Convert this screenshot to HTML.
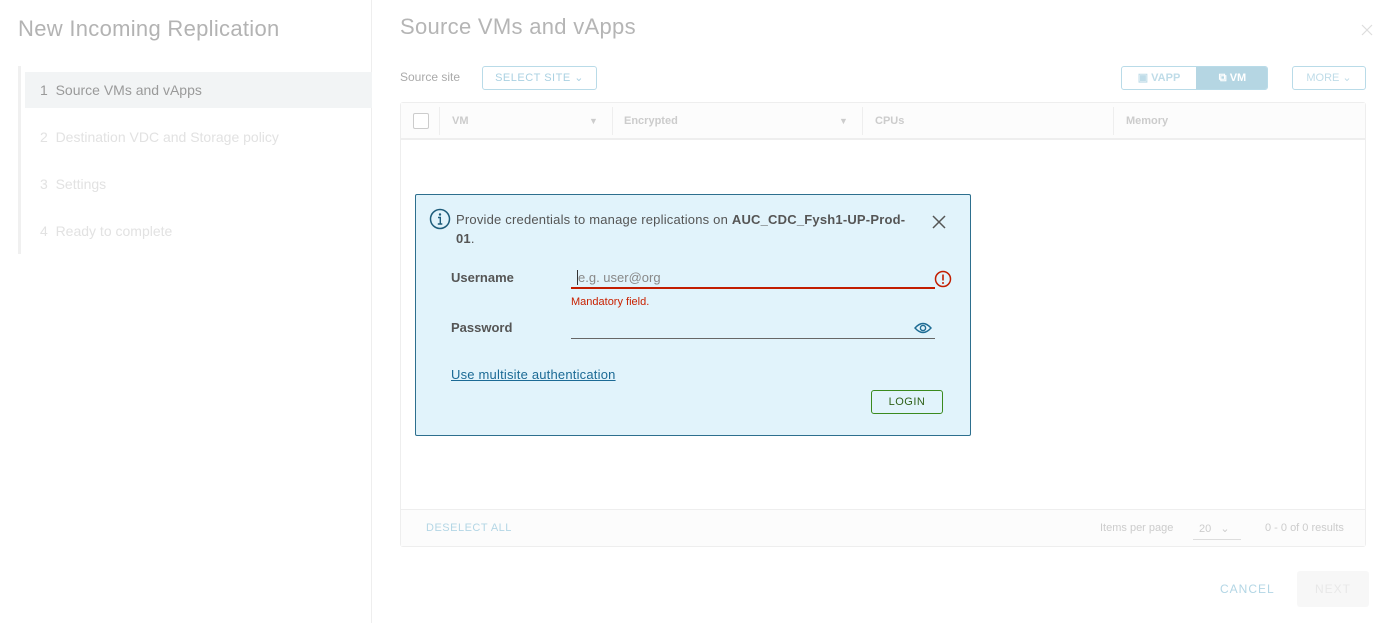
<!DOCTYPE html>
<html><head><style>
*{box-sizing:border-box;margin:0;padding:0}
body{width:1375px;height:623px;background:#fff;font-family:"Liberation Sans",sans-serif;position:relative;overflow:hidden;color:#565656}
.a{position:absolute}
</style></head><body>
<div class="a" style="left:0;top:0;width:372px;height:623px;border-right:1px solid #eee"></div>
<div class="a" style="left:18px;top:16px;font-size:22px;color:#b3b3b3;font-weight:300;letter-spacing:.3px">New Incoming Replication</div>
<div class="a" style="left:18px;top:66px;width:3px;height:188px;background:#f0f0f0"></div>
<div class="a" style="left:25px;top:72px;width:347px;height:36px;background:#f2f4f5"></div>
<div class="a" style="left:40px;top:82px;font-size:14px;color:#9a9a9a">1&nbsp;&nbsp;Source VMs and vApps</div>
<div class="a" style="left:40px;top:129px;font-size:14px;color:#e2e2e2">2&nbsp;&nbsp;Destination VDC and Storage policy</div>
<div class="a" style="left:40px;top:176px;font-size:14px;color:#e2e2e2">3&nbsp;&nbsp;Settings</div>
<div class="a" style="left:40px;top:223px;font-size:14px;color:#e2e2e2">4&nbsp;&nbsp;Ready to complete</div>

<div class="a" style="left:400px;top:14px;font-size:22px;color:#b5b5b5;font-weight:300;letter-spacing:.3px">Source VMs and vApps</div>
<svg class="a" style="left:1361px;top:24px" width="12" height="12"><path d="M1 1L11 11M11 1L1 11" stroke="#ddd" stroke-width="1.2"/></svg>
<div class="a" style="left:400px;top:70px;font-size:12px;color:#aaa">Source site</div>
<div class="a" style="left:482px;top:66px;width:115px;height:24px;border:1px solid #b9dbe8;border-radius:3px;font-size:11px;color:#aad1e2;text-align:center;line-height:22px;letter-spacing:.5px">SELECT SITE ⌄</div>
<div class="a" style="left:1121px;top:66px;width:147px;height:24px;border:1px solid #b9dbe8;border-radius:3px;overflow:hidden;font-size:11px;font-weight:bold;line-height:22px">
<div class="a" style="left:0;top:0;width:74px;height:22px;color:#bfdce8;text-align:center">▣ VAPP</div>
<div class="a" style="left:74px;top:0;width:73px;height:22px;background:#b5d6e3;color:#fff;text-align:center">⧉ VM</div></div>
<div class="a" style="left:1292px;top:66px;width:74px;height:24px;border:1px solid #b9dbe8;border-radius:3px;font-size:11px;color:#bfdce8;text-align:center;line-height:22px">MORE ⌄</div>

<div class="a" style="left:400px;top:102px;width:966px;height:445px;border:1px solid #eee;border-radius:3px"></div>
<div class="a" style="left:401px;top:103px;width:964px;height:37px;background:#fcfcfc;border-bottom:2px solid #eee;font-size:11px;color:#ccc;font-weight:bold">
<div class="a" style="left:12px;top:10px;width:16px;height:16px;border:1px solid #ccc;border-radius:2px;background:#fff"></div>
<div class="a" style="left:38px;top:4px;width:1px;height:28px;background:#eee"></div>
<div class="a" style="left:51px;top:12px">VM</div><div class="a" style="left:188px;top:13px;font-size:9px">▼</div>
<div class="a" style="left:211px;top:4px;width:1px;height:28px;background:#eee"></div>
<div class="a" style="left:223px;top:12px">Encrypted</div><div class="a" style="left:438px;top:13px;font-size:9px">▼</div>
<div class="a" style="left:461px;top:4px;width:1px;height:28px;background:#eee"></div>
<div class="a" style="left:474px;top:12px">CPUs</div>
<div class="a" style="left:712px;top:4px;width:1px;height:28px;background:#eee"></div>
<div class="a" style="left:725px;top:12px">Memory</div></div>
<div class="a" style="left:401px;top:509px;width:964px;height:37px;background:#fcfcfc;border-top:1px solid #eee;font-size:11px">
<div class="a" style="left:25px;top:12px;color:#b3d6e5;letter-spacing:.5px">DESELECT ALL</div>
<div class="a" style="left:699px;top:12px;color:#ccc">Items per page</div>
<div class="a" style="left:792px;top:8px;width:48px;height:22px;border-bottom:1px solid #ddd;color:#ccc;padding:4px 6px">20&nbsp;&nbsp;&nbsp;⌄</div>
<div class="a" style="left:864px;top:12px;color:#ccc">0 - 0 of 0 results</div></div>

<div class="a" style="left:1220px;top:582px;font-size:12px;color:#b3d6e5;letter-spacing:1px">CANCEL</div>
<div class="a" style="left:1297px;top:571px;width:72px;height:36px;background:#f7f7f7;border-radius:3px;font-size:12px;color:#e8e8e8;text-align:center;line-height:36px;letter-spacing:1px">NEXT</div>

<div class="a" style="left:415px;top:194px;width:556px;height:242px;background:#e1f3fb;border:1px solid #2d6f8e;border-radius:2px;font-size:13px">
<svg class="a" style="left:13px;top:13px" width="22" height="22" viewBox="0 0 22 22"><circle cx="11" cy="11" r="9.5" fill="none" stroke="#1e5c7a" stroke-width="1.5"/><circle cx="11" cy="6.5" r="1.2" fill="#1e5c7a"/><path d="M9 9.5h2.3v6.5M8.8 16h4.5" stroke="#1e5c7a" stroke-width="1.4" fill="none"/></svg>
<div class="a" style="left:40px;top:15px;width:462px;line-height:19px;color:#555;letter-spacing:.2px">Provide credentials to manage replications on <b>AUC_CDC_Fysh1-UP-Prod-01</b>.</div>
<svg class="a" style="left:516px;top:20px" width="14" height="14"><path d="M1 1L13 13M13 1L1 13" stroke="#555" stroke-width="1.5"/></svg>
<div class="a" style="left:35px;top:75px;font-weight:bold;color:#555">Username</div>
<div class="a" style="left:161px;top:75px;color:#888"><span style="border-left:1px solid #333"></span>e.g. user@org</div>
<div class="a" style="left:155px;top:92px;width:364px;height:2px;background:#c21d00"></div>
<svg class="a" style="left:518px;top:75px" width="18" height="18"><circle cx="9" cy="9" r="7.5" fill="none" stroke="#c21d00" stroke-width="1.5"/><path d="M9 4.5v6" stroke="#c21d00" stroke-width="1.6"/><circle cx="9" cy="13" r="1" fill="#c21d00"/></svg>
<div class="a" style="left:155px;top:101px;font-size:11px;color:#c92100">Mandatory field.</div>
<div class="a" style="left:35px;top:125px;font-weight:bold;color:#555">Password</div>
<div class="a" style="left:155px;top:143px;width:364px;height:1px;background:#666"></div>
<svg class="a" style="left:498px;top:127px" width="18" height="12"><path d="M1 6Q9 -3 17 6Q9 15 1 6Z" fill="none" stroke="#1e6c94" stroke-width="1.4"/><circle cx="9" cy="6" r="2.6" fill="none" stroke="#1e6c94" stroke-width="1.4"/></svg>
<div class="a" style="left:35px;top:172px;color:#1b6a95;text-decoration:underline;letter-spacing:.2px">Use multisite authentication</div>
<div class="a" style="left:455px;top:195px;width:72px;height:24px;border:1px solid #3a8a1e;border-radius:3px;font-size:11px;color:#30611a;text-align:center;line-height:22px;letter-spacing:.5px">LOGIN</div>
</div>
</body></html>
